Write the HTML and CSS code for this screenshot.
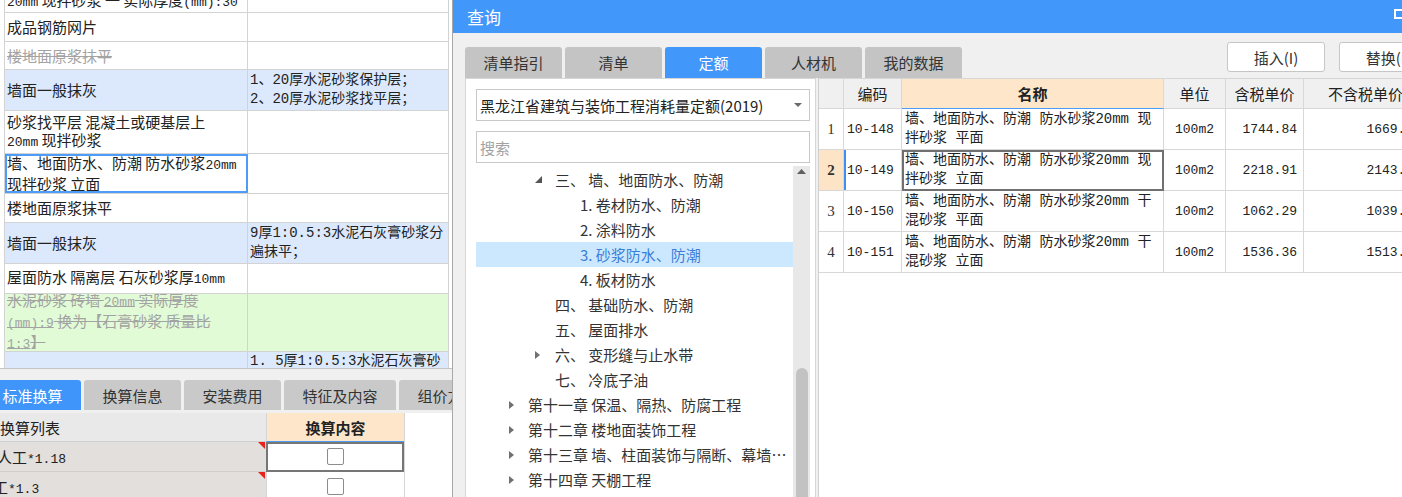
FILE: index.html
```html
<!DOCTYPE html>
<html lang="zh-CN">
<head>
<meta charset="utf-8">
<title>查询</title>
<link rel="stylesheet" href="styles.css">
</head>
<body>
<div class="app">
  <section class="left">
    <div class="grid">
      <div class="grid-inner">
        <div class="grow h42">
          <div class="gc c1"><span>水泥砂浆 砖墙 <span class="lat">20mm</span><br><span class="lat">20mm</span> 现拌砂浆 一 实际厚度<span class="lat">(mm):30</span></span></div>
          <div class="gc c2"></div>
        </div>
        <div class="grow h29">
          <div class="gc c1"><span>成品钢筋网片</span></div>
          <div class="gc c2"></div>
        </div>
        <div class="grow h28">
          <div class="gc c1 del"><span>楼地面原浆抹平</span></div>
          <div class="gc c2"></div>
        </div>
        <div class="grow h41 blue">
          <div class="gc c1"><span>墙面一般抹灰</span></div>
          <div class="gc c2"><span>1、20厚水泥砂浆保护层；<br>2、20厚水泥砂浆找平层；</span></div>
        </div>
        <div class="grow h42">
          <div class="gc c1"><span>砂浆找平层 混凝土或硬基层上<br><span class="lat">20mm</span> 现拌砂浆</span></div>
          <div class="gc c2"></div>
        </div>
        <div class="grow h40">
          <div class="gc c1 focus"><span>墙、地面防水、防潮 防水砂浆<span class="lat">20mm</span><br>现拌砂浆 立面</span></div>
          <div class="gc c2"></div>
        </div>
        <div class="grow h29">
          <div class="gc c1"><span>楼地面原浆抹平</span></div>
          <div class="gc c2"></div>
        </div>
        <div class="grow h41 blue">
          <div class="gc c1"><span>墙面一般抹灰</span></div>
          <div class="gc c2"><span>9厚1:0.5:3水泥石灰膏砂浆分<br>遍抹平；</span></div>
        </div>
        <div class="grow h30">
          <div class="gc c1"><span>屋面防水 隔离层 石灰砂浆厚<span class="lat">10mm</span></span></div>
          <div class="gc c2"></div>
        </div>
        <div class="grow h58 green">
          <div class="gc c1 del"><span>水泥砂浆 砖墙 <span class="lat">20mm</span>  实际厚度<br><span class="lat">(mm):9</span>  换为【石膏砂浆 质量比<br><span class="lat">1:3</span>】</span></div>
          <div class="gc c2"></div>
        </div>
        <div class="grow h18 blue">
          <div class="gc c1"></div>
          <div class="gc c2 top"><span>1. 5厚1:0.5:3水泥石灰膏砂</span></div>
        </div>
      </div>
    </div>

    <div class="btabs">
      <div class="btab active first">标准换算</div>
      <div class="btab">换算信息</div>
      <div class="btab">安装费用</div>
      <div class="btab wide">特征及内容</div>
      <div class="btab">组价方案</div>
    </div>

    <div class="conv">
      <div class="cv-h1">换算列表</div>
      <div class="cv-h2">换算内容</div>
      <div class="cv-blank"></div>

      <div class="cv-l"><span class="cut1">人工<span class="lat12">*1.18</span></span></div>
      <div class="cv-c current"><span class="cb"></span></div>
      <div class="cv-blank"></div>

      <div class="cv-l"><span class="cut2">人工<span class="lat12">*1.3</span></span></div>
      <div class="cv-c"><span class="cb"></span></div>
      <div class="cv-blank"></div>
    </div>
  </section>

  <section class="dialog">
    <header class="dtitle">
      <span>查询</span>
      <span class="maxbox"></span>
    </header>
    <div class="dbody">
      <div class="dtop">
        <div class="dtabs">
          <div class="dtab">清单指引</div>
          <div class="dtab">清单</div>
          <div class="dtab active">定额</div>
          <div class="dtab">人材机</div>
          <div class="dtab">我的数据</div>
        </div>
        <div class="dbtns">
          <button class="btn">插入(I)</button>
          <button class="btn">替换(I)</button>
        </div>
      </div>

      <div class="dmain">
        <div class="tree-panel">
          <div class="select">
            <span>黑龙江省建筑与装饰工程消耗量定额(2019)</span>
            <svg width="8" height="4" viewBox="0 0 8 4"><path d="M0 0H8L4 4Z" fill="#6a6a6a"/></svg>
          </div>
          <div class="search">搜索</div>
          <div class="treebox">
            <ul class="tree">
              <li class="lv2"><span class="tw"><svg width="7" height="7" viewBox="0 0 7 7"><path d="M7 0V7H0Z" fill="#555"/></svg></span><span class="tx">三、 墙、地面防水、防潮</span></li>
              <li class="lv3"><span class="tx">1. 卷材防水、防潮</span></li>
              <li class="lv3"><span class="tx">2. 涂料防水</span></li>
              <li class="lv3 sel"><span class="tx">3. 砂浆防水、防潮</span></li>
              <li class="lv3"><span class="tx">4. 板材防水</span></li>
              <li class="lv2"><span class="tw"></span><span class="tx">四、 基础防水、防潮</span></li>
              <li class="lv2"><span class="tw"></span><span class="tx">五、 屋面排水</span></li>
              <li class="lv2"><span class="tw"><svg width="5" height="8" viewBox="0 0 5 8"><path d="M0 0L5 4L0 8Z" fill="#707070"/></svg></span><span class="tx">六、 变形缝与止水带</span></li>
              <li class="lv2"><span class="tw"></span><span class="tx">七、 冷底子油</span></li>
              <li class="lv1"><span class="tw"><svg width="5" height="8" viewBox="0 0 5 8"><path d="M0 0L5 4L0 8Z" fill="#707070"/></svg></span><span class="tx">第十一章 保温、隔热、防腐工程</span></li>
              <li class="lv1"><span class="tw"><svg width="5" height="8" viewBox="0 0 5 8"><path d="M0 0L5 4L0 8Z" fill="#707070"/></svg></span><span class="tx">第十二章 楼地面装饰工程</span></li>
              <li class="lv1"><span class="tw"><svg width="5" height="8" viewBox="0 0 5 8"><path d="M0 0L5 4L0 8Z" fill="#707070"/></svg></span><span class="tx">第十三章 墙、柱面装饰与隔断、幕墙工程</span></li>
              <li class="lv1"><span class="tw"><svg width="5" height="8" viewBox="0 0 5 8"><path d="M0 0L5 4L0 8Z" fill="#707070"/></svg></span><span class="tx">第十四章 天棚工程</span></li>
            </ul>
            <div class="vscroll">
              <div class="up"><svg width="9" height="5" viewBox="0 0 9 5"><path d="M0 5L4.5 0L9 5Z" fill="#5f5f5f"/></svg></div>
              <div class="thumb"></div>
            </div>
          </div>
        </div>

        <div class="tpanel">
          <div class="qt">
            <div class="qh"></div>
            <div class="qh">编码</div>
            <div class="qh name">名称</div>
            <div class="qh">单位</div>
            <div class="qh">含税单价</div>
            <div class="qh">不含税单价</div>

            <div class="qc rn">1</div>
            <div class="qc code">10-148</div>
            <div class="qc nm"><span>墙、地面防水、防潮 防水砂浆20mm 现<br>拌砂浆 平面</span></div>
            <div class="qc unit">100m2</div>
            <div class="qc price">1744.84</div>
            <div class="qc price">1669.23</div>

            <div class="qc rn sel">2</div>
            <div class="qc code mark">10-149</div>
            <div class="qc nm current"><span>墙、地面防水、防潮 防水砂浆20mm 现<br>拌砂浆 立面</span></div>
            <div class="qc unit">100m2</div>
            <div class="qc price">2218.91</div>
            <div class="qc price">2143.28</div>

            <div class="qc rn">3</div>
            <div class="qc code">10-150</div>
            <div class="qc nm"><span>墙、地面防水、防潮 防水砂浆20mm 干<br>混砂浆 平面</span></div>
            <div class="qc unit">100m2</div>
            <div class="qc price">1062.29</div>
            <div class="qc price">1039.63</div>

            <div class="qc rn">4</div>
            <div class="qc code">10-151</div>
            <div class="qc nm"><span>墙、地面防水、防潮 防水砂浆20mm 干<br>混砂浆 立面</span></div>
            <div class="qc unit">100m2</div>
            <div class="qc price">1536.36</div>
            <div class="qc price">1513.71</div>
          </div>
        </div>
      </div>
    </div>
  </section>
</div>
</body>
</html>
```

FILE: styles.css
```css
* { box-sizing: border-box; }
html, body { margin: 0; padding: 0; }
body {
  width: 1402px;
  height: 497px;
  overflow: hidden;
  font-family: "Noto Sans CJK SC", "Noto Sans", sans-serif;
  color: #222;
  background: #fff;
}
.app { display: flex; width: 1402px; height: 497px; overflow: hidden; }

/* ---------- left panel ---------- */
.left {
  width: 452px;
  flex: none;
  display: flex;
  flex-direction: column;
  overflow: hidden;
  background: #fff;
}
.grid {
  flex: none;
  height: 369px;
  overflow: hidden;
  padding-left: 4px;
  border-bottom: 1px solid #c4c4c4;
}
.grid-inner {
  width: 445px;
  margin-top: -30px;
  border-left: 1px solid #d3d3d3;
}
.grow {
  display: grid;
  grid-template-columns: 243px 201px;
  border-bottom: 1px solid #d3d3d3;
}
.h18 { height: 18px; border-bottom: none; }
.h28 { height: 28px; }
.h29 { height: 29px; }
.h30 { height: 30px; }
.h40 { height: 40px; }
.h41 { height: 41px; }
.h42 { height: 43px; }
.h58 { height: 58px; }
.blue { background: #dce9fc; }
.green { background: #e2fbd7; }
.gc {
  display: flex;
  align-items: center;
  border-right: 1px solid #d3d3d3;
  white-space: nowrap;
  overflow: hidden;
}
.c1 { padding-left: 2px; font-size: 15px; line-height: 18px; }
.c2 {
  padding-left: 2px;
  font-family: "Liberation Mono", "Noto Sans CJK SC", monospace;
  font-size: 14px;
  line-height: 19px;
}
.c2.top { align-items: flex-start; padding-top: 0; }
.lat { font-family: "Liberation Mono", monospace; font-size: 13px; }
.del { color: #a3a3a3; text-decoration: line-through; }
.focus { outline: 2px solid #4d9df8; outline-offset: -2px; }

/* bottom tabs */
.btabs {
  flex: none;
  height: 44px;
  padding-top: 11px;
  display: flex;
  align-items: flex-start;
  gap: 3px;
  background: #f0f0f0;
}
.btab {
  flex: none;
  width: 97px;
  height: 30px;
  border-radius: 3px 3px 0 0;
  background: #c9c9c9;
  color: #333;
  font-size: 15px;
  display: flex;
  align-items: center;
  justify-content: center;
}
.btab.wide { width: 112px; }
.btab.first { margin-left: -16px; }
.btab.active { background: #3f95fa; color: #fff; }

.conv {
  flex: 1;
  display: grid;
  grid-template-columns: 266px 138px 48px;
  grid-template-rows: 29px 30px 30px;
  background: #fff;
}
.cv-h1 {
  background: #e9e9e9;
  border-bottom: 1px solid #d0d0d0;
  font-size: 15px;
  display: flex;
  align-items: center;
  overflow: hidden;
}
.cv-h2 {
  background: #fde6c9;
  border-bottom: 1px solid #4b9cf5;
  border-left: 1px solid #d6d6d6;
  font-size: 15px;
  font-weight: bold;
  display: flex;
  align-items: center;
  justify-content: center;
}
.cv-blank { background: #fff; border-left: 1px solid #d6d6d6; }
.cv-l {
  position: relative;
  background: #e2dfdc;
  border-bottom: 1px solid #cfcfcf;
  font-size: 15px;
  display: flex;
  align-items: center;
  overflow: hidden;
  white-space: nowrap;
}
.cv-l::after {
  content: "";
  position: absolute;
  top: 0;
  right: 1px;
  border-top: 7px solid #e8221a;
  border-left: 7px solid transparent;
}
.cut1 { margin-left: -3px; }
.cut2 { margin-left: -22px; }
.lat12 { font-family: "Liberation Mono", monospace; font-size: 13px; }
.cv-c {
  border-bottom: 1px solid #d6d6d6;
  border-left: 1px solid #d6d6d6;
  display: flex;
  align-items: center;
  justify-content: center;
}
.cv-c.current { outline: 2px solid #767676; outline-offset: -2px; }
.cb {
  width: 17px;
  height: 17px;
  border: 1px solid #8c8c8c;
  border-radius: 2px;
  background: #fff;
}

/* ---------- dialog ---------- */
.dialog {
  width: 1000px;
  flex: none;
  border-left: 1px solid #a8a8a8;
  background: #f0f0f0;
  display: flex;
  flex-direction: column;
}
.dtitle {
  flex: none;
  height: 33px;
  background: #4297fb;
  color: #fff;
  font-size: 17px;
  display: flex;
  align-items: center;
  padding-left: 14px;
}
.maxbox {
  margin-left: auto;
  margin-right: 46px;
  width: 12px;
  height: 10px;
  border: 2px solid #fff;
  align-self: flex-start;
  margin-top: 9px;
}
.dbody {
  flex: 1;
  min-height: 0;
  padding: 9px 15px 0 12px;
  display: flex;
  flex-direction: column;
}
.dtop { flex: none; height: 36px; display: flex; }
.dtabs { display: flex; gap: 3px; align-self: flex-end; }
.dtab {
  width: 97px;
  height: 31px;
  background: #c4c4c4;
  border-radius: 3px 3px 0 0;
  color: #333;
  font-size: 15px;
  display: flex;
  align-items: center;
  justify-content: center;
}
.dtab.active { background: #4297fb; color: #fff; }
.dbtns { margin-left: auto; display: flex; gap: 14px; align-self: flex-start; }
.btn {
  width: 98px;
  height: 30px;
  background: #fff;
  border: 1px solid #c6c6c6;
  border-radius: 3px;
  color: #333;
  font-family: "Noto Sans CJK SC", "Noto Sans", sans-serif;
  font-size: 15px;
  padding: 0;
}

.dmain { flex: 1; min-height: 0; display: flex; }
.tree-panel {
  flex: none;
  width: 351px;
  margin-right: 2px;
  background: #fff;
  border: 1px solid #d6d6d6;
  border-bottom: none;
  padding: 10px 5px 0 10px;
  display: flex;
  flex-direction: column;
}
.select {
  flex: none;
  height: 32px;
  border: 1px solid #c8c8c8;
  padding: 0 7px 0 3px;
  font-size: 15px;
  color: #222;
  display: flex;
  align-items: center;
  justify-content: space-between;
}
.search {
  flex: none;
  height: 32px;
  margin-top: 10px;
  border: 1px solid #c8c8c8;
  padding-left: 3px;
  font-size: 15px;
  color: #a2a2a2;
  display: flex;
  align-items: center;
}
.treebox { flex: 1; min-height: 0; margin-top: 3px; display: flex; }
.tree {
  flex: 1;
  min-width: 0;
  list-style: none;
  margin: 0;
  padding: 1px 0 0 0;
}
.tree li {
  height: 25px;
  display: flex;
  align-items: center;
  font-size: 15px;
  color: #333;
  white-space: nowrap;
}
.tree .tw { flex: none; display: flex; align-items: center; }
.tree .tx { min-width: 0; overflow: hidden; text-overflow: ellipsis; white-space: nowrap; }
.tree .lv1 { padding-left: 33px; }
.tree .lv1 .tw { width: 19px; }
.tree .lv2 { padding-left: 58px; }
.tree .lv2 .tw { width: 21px; padding-left: 1px; }
.tree .lv3 { padding-left: 104px; }
.tree li.sel { background: #cce8ff; color: #3b7fd8; }
.vscroll {
  flex: none;
  width: 17px;
  background: #e8e8e8;
  display: flex;
  flex-direction: column;
  align-items: center;
}
.up { height: 14px; display: flex; align-items: center; padding-top: 2px; }
.thumb {
  margin-top: 192px;
  width: 12px;
  height: 200px;
  background: #c2c2c2;
  border-radius: 6px 6px 0 0;
}

.tpanel {
  flex: 1;
  background: #fff;
  border-left: 1px solid #cfcfcf;
  border-top: 1px solid #d6d6d6;
}
.qt {
  display: grid;
  grid-template-columns: 25px 58px 262px 62px 78px 124px;
  grid-template-rows: 30px repeat(4, 41px);
}
.qh, .qc {
  border-right: 1px solid #d8d8d8;
  border-bottom: 1px solid #d8d8d8;
  display: flex;
  align-items: center;
  white-space: nowrap;
  overflow: hidden;
}
.qh {
  background: #f0f0f0;
  justify-content: center;
  font-size: 15px;
  color: #222;
}
.qh.name { background: #fde6c9; font-weight: bold; border-bottom-color: #4b9cf5; }
.rn {
  justify-content: center;
  font-family: "Liberation Serif", serif;
  font-size: 15px;
  color: #333;
}
.rn.sel { background: #fde4c6; font-weight: bold; }
.code, .unit, .price {
  font-family: "Liberation Mono", monospace;
  font-size: 13px;
  color: #222;
}
.code { padding-left: 3px; }
.code.mark { box-shadow: inset 2px 0 #3d8ef5; }
.unit { justify-content: center; }
.price { justify-content: flex-end; padding-right: 6px; }
.nm {
  padding-left: 3px;
  font-family: "Liberation Mono", "Noto Sans CJK SC", monospace;
  font-size: 14px;
  line-height: 19px;
}
.nm.current { outline: 2px solid #707070; outline-offset: -2px; }
```
